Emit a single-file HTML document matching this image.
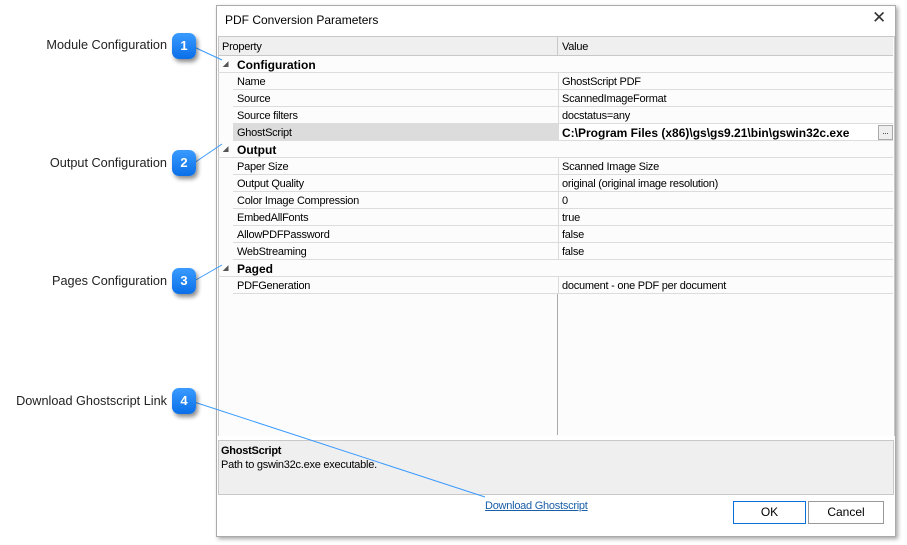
<!DOCTYPE html><html><head><style>
body{margin:0;width:907px;height:545px;background:#fff;font-family:"Liberation Sans",sans-serif;font-size:11px;color:#000;position:relative;overflow:hidden}
.a{position:absolute}
.lbl{font-size:12.7px;color:#222;text-align:right;width:167px;left:0}
.badge{width:24px;height:26px;border-radius:7px;background:linear-gradient(#3a9bff,#0a6fe8);color:#fff;font-weight:bold;font-size:13px;text-align:center;line-height:26px;box-shadow:2px 3px 4px rgba(0,0,0,.45)}
.row{position:absolute;left:233px;width:660px;height:16px;border-bottom:1px solid #dcdcdc;line-height:18px;letter-spacing:-0.25px}
.row span{position:absolute;left:4px}
.row b.v{font-weight:normal;position:absolute;left:325px;border-left:1px solid #dcdcdc;height:16px;padding-left:3px}
.cat{position:absolute;left:218px;width:675px;height:16px;border-bottom:1px solid #dcdcdc;line-height:18px;font-weight:bold;font-size:12px}
.cat i{position:absolute;left:5px;font-style:normal;font-size:7px;color:#555}
.cat span{position:absolute;left:19px}
</style></head><body>
<div class="a lbl" style="top:38px">Module Configuration</div>
<div class="a lbl" style="top:156px">Output Configuration</div>
<div class="a lbl" style="top:274px">Pages Configuration</div>
<div class="a lbl" style="top:394px">Download Ghostscript Link</div>
<div class="a" style="left:216px;top:5px;width:678px;height:530px;border:1px solid #aaa;background:#fff;box-shadow:2px 2px 4px rgba(0,0,0,.35)"></div>
<div class="a" style="left:225px;top:13px;font-size:12px">PDF Conversion Parameters</div>
<div class="a" style="left:872px;top:8px;font-size:17px;color:#333">✕</div>
<div class="a" style="left:218px;top:36px;width:675px;height:399px;border:1px solid #c8c8c8;border-bottom:none;background:#fcfcfc"></div>
<div class="a" style="left:219px;top:37px;width:674px;height:18px;background:#efefef;border-bottom:1px solid #c8c8c8"></div>
<div class="a" style="left:222px;top:41px;font-size:11px;letter-spacing:-0.25px">Property</div>
<div class="a" style="left:557px;top:37px;width:2px;height:18px;border-left:1px solid #c8c8c8"></div>
<div class="a" style="left:562px;top:41px;letter-spacing:-0.25px">Value</div>
<div class="a" style="left:557px;top:294px;width:1px;height:141px;background:#aaa"></div>
<div class="cat" style="top:56px"><i>◢</i><span>Configuration</span></div>
<div class="row" style="top:73px"><span>Name</span><b class="v">GhostScript PDF</b></div>
<div class="row" style="top:90px"><span>Source</span><b class="v">ScannedImageFormat</b></div>
<div class="row" style="top:107px"><span>Source filters</span><b class="v">docstatus=any</b></div>
<div class="row" style="top:124px;background:linear-gradient(90deg,#dcdcdc 325px,#fff 325px)"><span>GhostScript</span><b class="v" style="font-weight:bold;font-size:12px;letter-spacing:0">C:\Program Files (x86)\gs\gs9.21\bin\gswin32c.exe</b><div class="a" style="left:645px;top:1px;width:13px;height:13px;border:1px solid #aaa;background:#eee;font-size:8px;line-height:12px;text-align:center">...</div></div>
<div class="cat" style="top:141px"><i>◢</i><span>Output</span></div>
<div class="row" style="top:158px"><span>Paper Size</span><b class="v">Scanned Image Size</b></div>
<div class="row" style="top:175px"><span>Output Quality</span><b class="v">original (original image resolution)</b></div>
<div class="row" style="top:192px"><span>Color Image Compression</span><b class="v">0</b></div>
<div class="row" style="top:209px"><span>EmbedAllFonts</span><b class="v">true</b></div>
<div class="row" style="top:226px"><span>AllowPDFPassword</span><b class="v">false</b></div>
<div class="row" style="top:243px"><span>WebStreaming</span><b class="v">false</b></div>
<div class="cat" style="top:260px"><i>◢</i><span>Paged</span></div>
<div class="row" style="top:277px"><span>PDFGeneration</span><b class="v">document - one PDF per document</b></div>
<div class="a" style="left:218px;top:440px;width:674px;height:53px;border:1px solid #c8c8c8;background:#efefef"></div>
<div class="a" style="left:221px;top:445px;font-weight:bold;font-size:11px;letter-spacing:-0.25px">GhostScript</div>
<div class="a" style="left:221px;top:459px;letter-spacing:-0.25px">Path to gswin32c.exe executable.</div>
<div class="a" style="left:485px;top:500px;color:#1a5ea8;text-decoration:underline;letter-spacing:-0.25px">Download Ghostscript</div>
<div class="a" style="left:733px;top:501px;width:71px;height:21px;border:1px solid #0a6fd8;background:#fff;text-align:center;line-height:21px;font-size:12px">OK</div>
<div class="a" style="left:808px;top:501px;width:74px;height:21px;border:1px solid #999;background:#fff;text-align:center;line-height:21px;font-size:12px">Cancel</div>
<svg class="a" style="left:0;top:0" width="907" height="545">
<line x1="194" y1="47" x2="222" y2="60" stroke="#3a9bff"/>
<line x1="194" y1="163" x2="222" y2="144" stroke="#3a9bff"/>
<line x1="194" y1="281" x2="222" y2="265" stroke="#3a9bff"/>
<line x1="191" y1="401" x2="485" y2="497" stroke="#3a9bff"/>
</svg>
<div class="a badge" style="left:172px;top:33px">1</div>
<div class="a badge" style="left:172px;top:150px">2</div>
<div class="a badge" style="left:172px;top:268px">3</div>
<div class="a badge" style="left:172px;top:388px">4</div>
</body></html>
